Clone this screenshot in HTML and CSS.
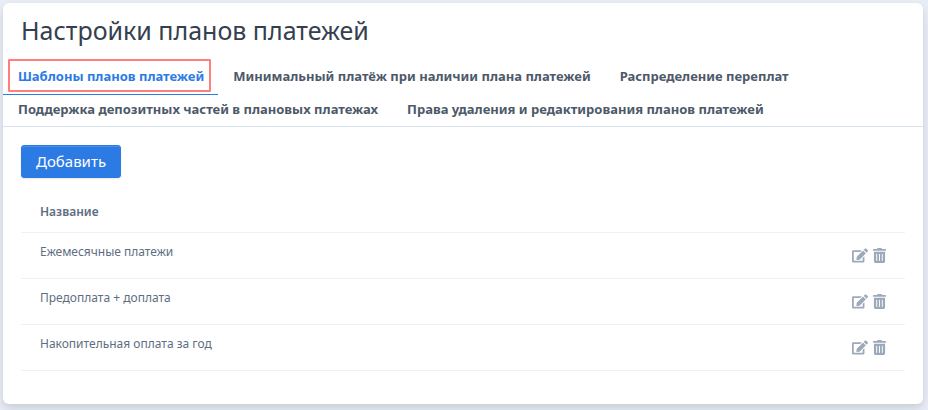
FILE: index.html
```html
<!DOCTYPE html>
<html lang="ru">
<head>
    <meta charset="UTF-8">
    <meta name="viewport" content="width=device-width, initial-scale=1.0">
    <title>Настройки планов платежей</title>
    <link rel="stylesheet" href="styles.css">
</head>
<body>
    <svg class="sprite" aria-hidden="true">
        <symbol id="icon-edit" viewBox="0 0 576 512">
            <path d="M402.6 83.2l90.2 90.2c3.8 3.8 3.8 10 0 13.8L274.4 405.6l-92.8 10.3c-12.4 1.4-22.9-9.1-21.5-21.5l10.3-92.8L388.8 83.2c3.8-3.8 10-3.8 13.8 0zm162-22.9l-48.8-48.8c-15.2-15.2-39.9-15.2-55.2 0l-35.4 35.4c-3.8 3.8-3.8 10 0 13.8l90.2 90.2c3.8 3.8 10 3.8 13.8 0l35.4-35.4c15.2-15.3 15.2-40 0-55.2zM384 346.2V448H64V128h229.8c3.2 0 6.2-1.3 8.5-3.5l40-40c7.6-7.6 2.2-20.5-8.5-20.5H48C21.5 64 0 85.5 0 112v352c0 26.5 21.5 48 48 48h352c26.5 0 48-21.5 48-48V306.2c0-10.7-12.9-16-20.5-8.5l-40 40c-2.2 2.3-3.5 5.3-3.5 8.5z"/>
        </symbol>
        <symbol id="icon-trash" viewBox="0 0 448 512">
            <path d="M32 464a48 48 0 0 0 48 48h288a48 48 0 0 0 48-48V128H32zm272-256a16 16 0 0 1 32 0v224a16 16 0 0 1-32 0zm-96 0a16 16 0 0 1 32 0v224a16 16 0 0 1-32 0zm-96 0a16 16 0 0 1 32 0v224a16 16 0 0 1-32 0zM432 32H312l-9.4-18.7A24 24 0 0 0 281.1 0H166.8a23.72 23.72 0 0 0-21.4 13.3L136 32H16A16 16 0 0 0 0 48v32a16 16 0 0 0 16 16h416a16 16 0 0 0 16-16V48a16 16 0 0 0-16-16z"/>
        </symbol>
    </svg>

    <main class="card">
        <h1 class="title">Настройки планов платежей</h1>

        <nav class="tabs">
            <a href="#templates" class="tab active" aria-current="page">Шаблоны планов платежей</a>
            <a href="#minimum" class="tab">Минимальный платёж при наличии плана платежей</a>
            <a href="#overpayment" class="tab">Распределение переплат</a>
            <a href="#deposit" class="tab">Поддержка депозитных частей в плановых платежах</a>
            <a href="#rights" class="tab">Права удаления и редактирования планов платежей</a>
        </nav>

        <div class="content" id="templates">
            <button type="button" class="btn-add">Добавить</button>

            <table class="plans">
                <thead>
                    <tr>
                        <th scope="col">Название</th>
                        <td></td>
                    </tr>
                </thead>
                <tbody>
                    <tr>
                        <td>Ежемесячные платежи</td>
                        <td class="actions">
                            <button type="button" class="btn-icon" aria-label="Редактировать"><svg class="icon-edit"><use href="#icon-edit"/></svg></button>
                            <button type="button" class="btn-icon" aria-label="Удалить"><svg class="icon-trash"><use href="#icon-trash"/></svg></button>
                        </td>
                    </tr>
                    <tr>
                        <td>Предоплата + доплата</td>
                        <td class="actions">
                            <button type="button" class="btn-icon" aria-label="Редактировать"><svg class="icon-edit"><use href="#icon-edit"/></svg></button>
                            <button type="button" class="btn-icon" aria-label="Удалить"><svg class="icon-trash"><use href="#icon-trash"/></svg></button>
                        </td>
                    </tr>
                    <tr>
                        <td>Накопительная оплата за год</td>
                        <td class="actions">
                            <button type="button" class="btn-icon" aria-label="Редактировать"><svg class="icon-edit"><use href="#icon-edit"/></svg></button>
                            <button type="button" class="btn-icon" aria-label="Удалить"><svg class="icon-trash"><use href="#icon-trash"/></svg></button>
                        </td>
                    </tr>
                </tbody>
            </table>
        </div>
    </main>
</body>
</html>
```
FILE: styles.css
```css
* {
    box-sizing: border-box;
}

body {
    margin: 0;
    padding: 3px 5px 6px 3px;
    background-color: #e9eef6;
    font-family: "Noto Sans", "Open Sans", sans-serif;
    font-size: 12px;
    color: #5e6e82;
}

.sprite {
    display: none;
}

.card {
    background-color: #fff;
    border-radius: 6px;
    box-shadow: 0 7px 14px rgba(65, 69, 88, 0.1), 0 3px 6px rgba(0, 0, 0, 0.07);
}

.title {
    margin: 0;
    padding: 10px 18px 13px;
    font-size: 25px;
    font-weight: 400;
    line-height: 34px;
    color: #344050;
}

.tabs {
    display: flex;
    flex-wrap: wrap;
    border-bottom: 1px solid #d8e2ef;
}

.tab {
    position: relative;
    margin-bottom: -2px;
    padding: 5px 14px 7px 15px;
    border-bottom: 1px solid transparent;
    font-size: 13px;
    font-weight: 700;
    line-height: 22px;
    color: #4d5969;
    text-decoration: none;
}

.tab.active {
    border-bottom-color: #2c7be5;
    color: #2c7be5;
}

/* red frame around the current tab */
.tab.active::after {
    content: "";
    position: absolute;
    inset: -1px 7px 2px 5px;
    border: 2px solid #ff7f7f;
    border-radius: 1px;
}

.content {
    padding: 18px 18px 33px;
}

.btn-add {
    display: block;
    padding: 0 14px;
    border: 1px solid #2c7be5;
    border-radius: 3px;
    background-color: #2c7be5;
    box-shadow: 0 1px 2px rgba(0, 0, 0, 0.1), inset 0 1px 0 rgba(255, 255, 255, 0.15);
    color: #fff;
    font-family: inherit;
    font-size: 15px;
    line-height: 31px;
    cursor: pointer;
}

.btn-add:hover {
    background-color: #2569c3;
}

.plans {
    width: 100%;
    margin-top: 13px;
    border-collapse: collapse;
}

.plans th,
.plans td {
    height: 46px;
    padding: 10px 19px;
    border-bottom: 1px solid #edf2f9;
    line-height: 18px;
    text-align: left;
    vertical-align: top;
}

.plans thead th,
.plans thead td {
    height: 41px;
    padding-top: 12px;
    font-weight: 600;
}

.plans .actions {
    padding-top: 15px;
    padding-bottom: 0;
    text-align: right;
    white-space: nowrap;
    font-size: 0;
}

.btn-icon {
    margin-left: 5px;
    padding: 0;
    border: 0;
    background: none;
    color: #9da9bb;
    cursor: pointer;
}

.btn-icon:hover {
    color: #5e6e82;
}

.btn-icon svg {
    display: block;
    height: 15px;
    fill: currentColor;
}

.icon-edit {
    width: 16px;
}

.icon-trash {
    width: 13px;
}
```
